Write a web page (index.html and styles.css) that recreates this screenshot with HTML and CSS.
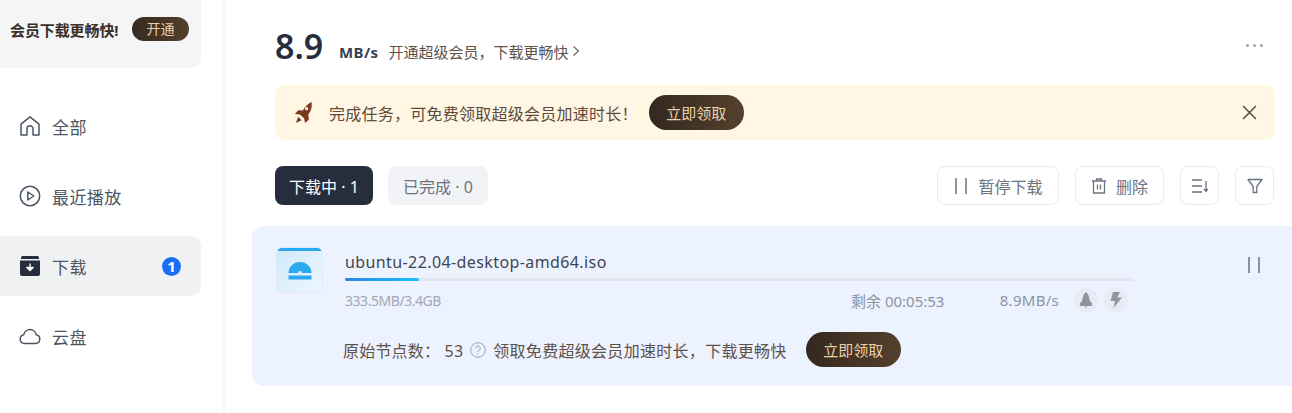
FILE: index.html
```html
<!DOCTYPE html>
<html lang="zh-CN">
<head>
  <meta charset="UTF-8">
  <meta name="viewport" content="width=device-width, initial-scale=1.0">
  <title>下载</title>
  <link rel="stylesheet" href="styles.css">
</head>
<body>
  <aside class="sidebar">
    <div class="promo">
      <span class="promo-text">会员下载更畅快!</span>
      <button class="promo-btn">开通</button>
    </div>
    <nav class="nav">
      <a class="nav-item">
        <svg class="nav-icon" viewBox="0 0 22 22" fill="none" stroke="#4b5563" stroke-width="1.5" stroke-linejoin="round"><path d="M11 1.8 2 9.2V20h6v-6.2a3 3 0 0 1 6 0V20h6V9.2z"/></svg>
        <span>全部</span>
      </a>
      <a class="nav-item">
        <svg class="nav-icon" viewBox="0 0 22 22" fill="none" stroke="#4b5563" stroke-width="1.5" stroke-linejoin="round"><circle cx="11" cy="11" r="9.7"/><path d="M8.8 7v8l6-4z"/></svg>
        <span>最近播放</span>
      </a>
      <a class="nav-item active">
        <svg class="nav-icon" viewBox="0 0 22 22"><path d="M3.5 1h15a1.5 1.5 0 0 1 1.5 1.500V4H2V2.500A1.500 1.500 0 0 1 3.500 1z" fill="#262e3d"/><path d="M1 5.500h20V19a2 2 0 0 1-2 2H3a2 2 0 0 1-2-2z" fill="#262e3d"/><path d="M11 8.500v5.500M7.800 12.500 11 15.500l3.200-3z" fill="#fff" stroke="#fff" stroke-width="1.300" stroke-linejoin="round"/></svg>
        <span>下载</span>
        <span class="nav-badge">1</span>
      </a>
      <a class="nav-item">
        <svg class="nav-icon" viewBox="0 0 22 22" fill="none" stroke="#4b5563" stroke-width="1.500" stroke-linejoin="round"><path d="M5.500 18.500a4.400 4.400 0 0 1-.8-8.700 6.400 6.400 0 0 1 12.600 0 4.400 4.400 0 0 1-.8 8.700z"/></svg>
        <span>云盘</span>
      </a>
    </nav>
  </aside>

  <main class="content">
    <header class="speed-row">
      <span class="speed-num">8.9</span>
      <span class="speed-unit">MB/s</span>
      <span class="speed-tip">开通超级会员，下载更畅快</span>
      <svg class="chevron" viewBox="0 0 8 12" fill="none" stroke="#6b5a4d" stroke-width="1.100"><path d="M1.500 1.500 6.500 6l-5 4.500"/></svg>
      <span class="more"><i></i><i></i><i></i></span>
    </header>

    <div class="banner">
      <svg class="rocket" viewBox="0 0 22 24"><path d="M19.500 1c.6 5-.4 9.500-3.500 13l.6 5.500-4 3.500-1-5-4.400-4L2 13.500 5.500 9.700l4.800.3C12.800 6 15.500 2.500 19.500 1z" fill="#7a3a1e"/><path d="M5.500 16.500 9 20l-6 3z" fill="#7a3a1e"/><circle cx="14.300" cy="8" r="1.700" fill="#fff5e4"/></svg>
      <span class="banner-text">完成任务，可免费领取超级会员加速时长！</span>
      <button class="claim-btn">立即领取</button>
      <svg class="close" viewBox="0 0 14 14" fill="none" stroke="#5a4a3e" stroke-width="1.400"><path d="M1 1l12 12M13 1 1 13"/></svg>
    </div>

    <div class="toolbar">
      <button class="tab tab-on">下载中 · 1</button>
      <button class="tab">已完成 · 0</button>
      <div class="tools">
        <button class="tool tool-pause">
          <svg class="tool-icon" viewBox="0 0 14 16" fill="none" stroke="#6b7280" stroke-width="1.500"><path d="M2 0v16M12 0v16"/></svg>
          暂停下载
        </button>
        <button class="tool tool-del">
          <svg class="tool-icon" viewBox="0 0 16 16" fill="none" stroke="#6b7280" stroke-width="1.300" stroke-linejoin="round"><path d="M1 3h14M5.500 3V1h5v2M2.500 3v12h11V3M6.500 6.500v5M9.500 6.500v5"/></svg>
          删除
        </button>
        <button class="tool tool-square">
          <svg class="tool-icon" viewBox="0 0 16 14" fill="none" stroke="#6b7280" stroke-width="1.300"><path d="M0 1h10M0 7h10M0 13h10M14 2v10M12 10l2 2.500 2-2.500"/></svg>
        </button>
        <button class="tool tool-square">
          <svg class="tool-icon" viewBox="0 0 16 16" fill="none" stroke="#6b7280" stroke-width="1.300" stroke-linejoin="round"><path d="M1 1.500h14L9.800 8.500v6H6.200v-6z"/></svg>
        </button>
      </div>
    </div>

    <section class="task">
      <div class="task-file">
        <div class="file-top"></div>
        <svg class="file-logo" viewBox="0 0 24 18"><path d="M.5 11a11.500 11 0 0 1 23 0H14a2 2 0 0 0-4 0z" fill="#29aaf0"/><rect x=".5" y="13.500" width="23" height="4" fill="#29aaf0"/></svg>
      </div>
      <div class="task-body">
        <div class="task-name">ubuntu-22.04-desktop-amd64.iso</div>
        <div class="progress"><div class="progress-fill" style="width: 9.4%"></div></div>
        <div class="task-meta">
          <span class="meta-size">333.5MB/3.4GB</span>
          <span class="meta-left">剩余 00:05:53</span>
          <span class="meta-speed">8.9MB/s</span>
          <span class="meta-badge">
            <svg viewBox="0 0 14 16"><path d="M7 0c2.500 2 3.500 5 3.500 8l2.500 3.500V14H1v-2.500L3.500 8C3.500 5 4.500 2 7 0z" fill="#8d94a0"/><path d="M5.500 14.500h3L7 16z" fill="#8d94a0"/></svg>
          </span>
          <span class="meta-badge">
            <svg viewBox="0 0 14 16"><path d="M8 0H4L1.500 9H6l-1.500 7L13 5.500H8.200L11 0z" fill="#8d94a0"/></svg>
          </span>
        </div>
        <div class="task-foot">
          <span class="foot-nodes">原始节点数： 53</span>
          <svg class="help" viewBox="0 0 16 16" fill="none" stroke="#9ca3af" stroke-width="1"><circle cx="8" cy="8" r="7.300"/><path d="M5.800 6.200a2.200 2.200 0 1 1 3.400 1.900c-.8.500-1.200.9-1.200 1.900M8 11.300v1.200"/></svg>
          <span class="foot-tip">领取免费超级会员加速时长，下载更畅快</span>
          <button class="claim-btn">立即领取</button>
        </div>
      </div>
      <svg class="task-pause" viewBox="0 0 14 16" fill="none" stroke="#6b7280" stroke-width="1.500"><path d="M2 0v16M12 0v16"/></svg>
    </section>
  </main>
</body>
</html>
```

FILE: styles.css
```css
* { box-sizing: border-box; }
html, body { margin: 0; height: 100%; overflow: hidden; }
body { display: flex; background: #fff; color: #262e3d; font-family: "Noto Sans", "Noto Sans CJK SC", sans-serif; font-size: 15px; }
button { font-family: inherit; border: none; padding: 0; }

/* sidebar */
.sidebar { width: 225px; flex: none; border-right: 2px solid #f7f7f8; padding-right: 22px; }
.promo { height: 68px; background: #f4f5f7; border-radius: 0 0 10px 0; display: flex; align-items: center; padding: 0 12px 10px 10px; justify-content: space-between; }
.promo-text { font-size: 15px; font-weight: 700; color: #3a3029; letter-spacing: -0.1px; white-space: nowrap; }
.promo-btn { width: 57px; height: 24px; flex: none; border-radius: 12px; background: linear-gradient(90deg, #362a20, #54402d); color: #eccfa9; font-size: 14px; line-height: 24px; }
.nav { margin-top: 28px; display: flex; flex-direction: column; gap: 10px; }
.nav-item { height: 60px; display: flex; align-items: center; padding: 0 20px 0 19px; border-radius: 0 10px 10px 0; color: #4b5563; font-size: 17px; letter-spacing: 0.4px; }
.nav-item.active { background: #f0f1f3; }
.nav-icon { width: 22px; height: 22px; margin-right: 11px; flex: none; }
.nav-badge { margin-left: auto; width: 19px; height: 19px; border-radius: 50%; background: #1a6ef5; color: #fff; font-size: 15px; font-weight: 700; line-height: 19px; text-align: center; letter-spacing: 0; }

/* main */
.content { flex: 1; min-width: 0; padding-top: 24px; }
.speed-row { height: 46px; margin: 0 17px 0 50px; display: flex; align-items: center; color: #4b5563; }
.speed-num { font-size: 34px; font-weight: 600; color: #262e3d; width: 64px; line-height: 46px; margin-top: -2px; }
.speed-unit { font-size: 15px; font-weight: 700; color: #374151; margin-right: 10px; padding-top: 10px; letter-spacing: 0.4px; }
.speed-tip { font-size: 15px; color: #5e5148; padding-top: 8px; }
.chevron { width: 8px; height: 12px; margin: 8px 0 0 3px; }
.more { margin-left: auto; display: flex; gap: 4px; margin-bottom: 4px; margin-right: 12px; }
.more i { width: 3px; height: 3px; border-radius: 50%; background: #9ca3af; }

.banner { height: 55px; margin: 15px 17px 0 50px; background: #fff6e3; border-radius: 10px; display: flex; align-items: center; padding-left: 18px; }
.rocket { width: 21px; height: 23px; margin-right: 15px; }
.banner-text { font-size: 16px; color: #5f4a3c; letter-spacing: 0.25px; }
.claim-btn { width: 95px; height: 35px; flex: none; border-radius: 18px; background: linear-gradient(90deg, #33281f, #54402d); color: #eccfa9; font-size: 15px; }
.banner .claim-btn { margin-left: 11px; }
.close { width: 15px; height: 15px; margin-left: auto; margin-right: 18px; }

.toolbar { margin: 26px 18px 0 50px; height: 39px; display: flex; align-items: center; gap: 15px; }
.tab { width: 98px; height: 39px; border-radius: 8px; background: #f2f3f6; color: #6b7280; font-size: 16px; }
.tab + .tab { width: 100px; }
.tab-on { background: #262e3d; color: #fff; }
.tools { margin-left: auto; display: flex; gap: 16px; }
.tool { height: 39px; border: 1px solid #e9eaee; border-radius: 8px; background: #fff; color: #6b7280; font-size: 16px; display: flex; align-items: center; justify-content: center; }
.tool-icon { width: 16px; height: 16px; }
.tool-pause { width: 122px; gap: 9px; }
.tool-del { width: 89px; gap: 9px; }
.tool-square { width: 39px; }

/* task card */
.task { height: 160px; margin: 21px 0 0 27px; background: #ecf2fe; border-radius: 12px 0 0 12px; display: flex; padding: 21px 0 0 24px; position: relative; }
.task-file { width: 47px; height: 46px; border-radius: 6px; background: linear-gradient(135deg, #cfe9fa, #eef6fd); border: 1px solid #dcecf9; overflow: hidden; display: flex; flex-direction: column; align-items: center; flex: none; }
.file-top { width: 100%; height: 3px; background: #29aaf0; flex: none; }
.file-logo { width: 24px; height: 18px; margin-top: 11px; }
.task-body { width: 789px; margin-left: 22px; }
.task-name { font-size: 16px; line-height: 20px; height: 20px; margin-top: 5px; color: #3f4651; letter-spacing: 0.4px; }
.progress { height: 3px; margin-top: 6px; background: #e2e6ef; border-radius: 2px; }
.progress-fill { height: 100%; background: linear-gradient(90deg, #2b84ea, #18c2fb); border-radius: 2px; }
.task-meta { display: flex; align-items: center; height: 24px; margin-top: 7px; font-size: 14px; color: #a3a9b4; }
.meta-size { width: 507px; letter-spacing: -0.45px; }
.meta-left { width: 149px; color: #8d94a0; font-size: 15px; }
.meta-speed { margin-right: 15px; color: #8d94a0; font-size: 15px; letter-spacing: 0.3px; }
.meta-badge { width: 24px; height: 24px; border-radius: 50%; background: #e6ebf5; margin-right: 6px; display: flex; align-items: center; justify-content: center; }
.meta-badge svg { width: 14px; height: 16px; }
.task-foot { display: flex; align-items: center; margin-top: 20px; margin-left: -2px; font-size: 16px; color: #5e5148; }
.foot-nodes { letter-spacing: 0.2px; }
.help { width: 16px; height: 16px; margin: 0 7px; flex: none; }
.foot-tip { margin-right: 19px; white-space: nowrap; letter-spacing: 0.3px; }
.task-pause { width: 14px; height: 16px; margin: 10px 0 0 auto; margin-right: 31px; }
```
